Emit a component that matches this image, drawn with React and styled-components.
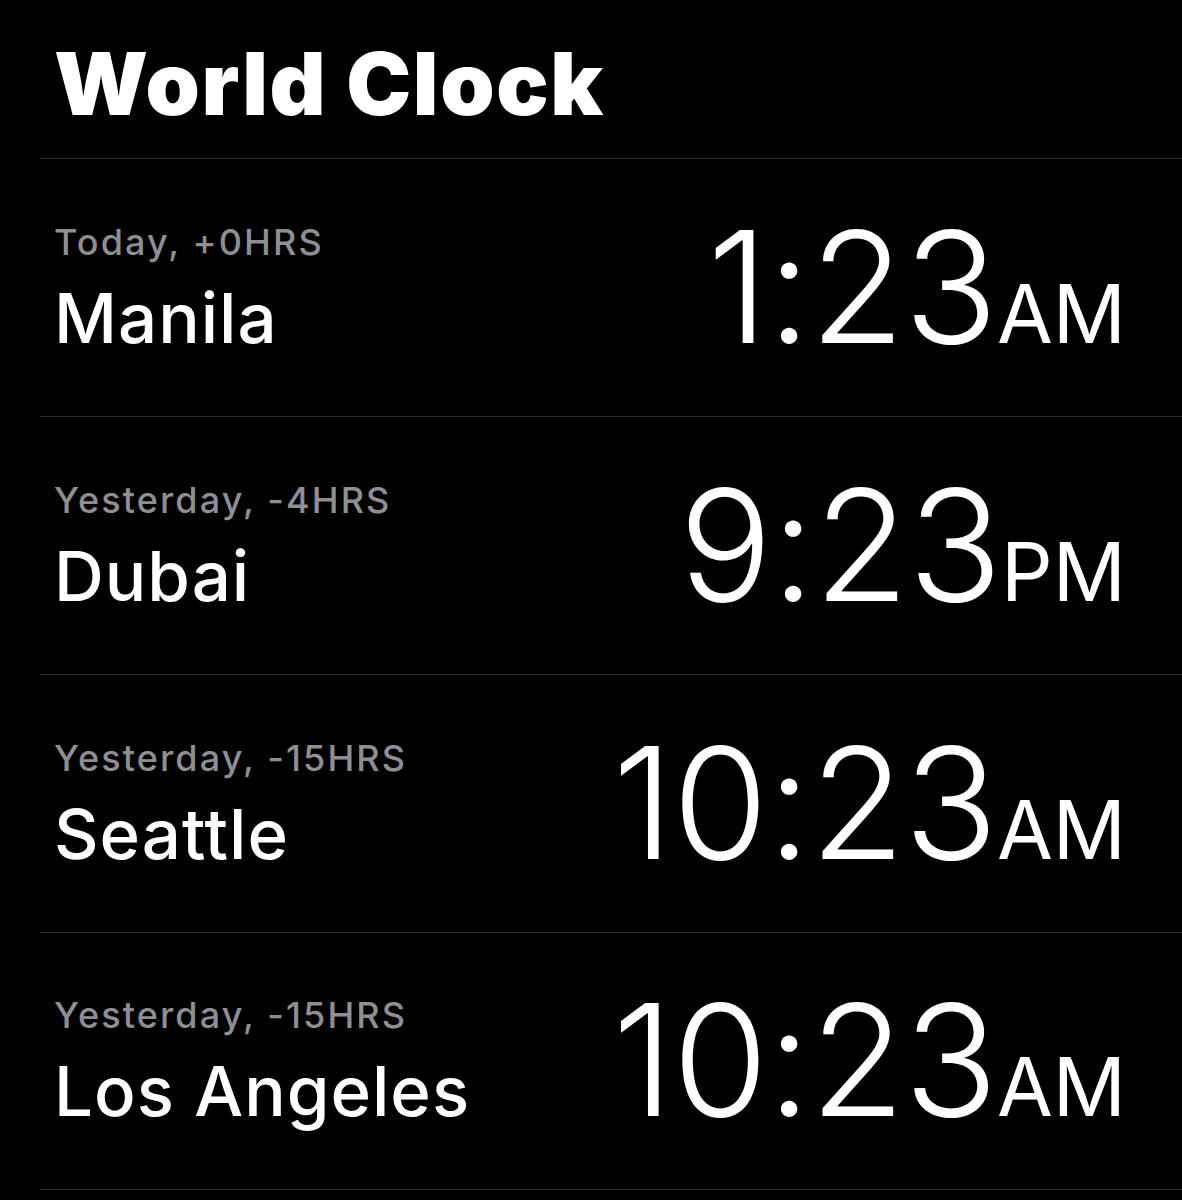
import styled, { createGlobalStyle } from "styled-components";

const cities = [
  { day: "Today, +0HRS", name: "Manila", time: "1:23", meridiem: "AM" },
  { day: "Yesterday, -4HRS", name: "Dubai", time: "9:23", meridiem: "PM" },
  { day: "Yesterday, -15HRS", name: "Seattle", time: "10:23", meridiem: "AM" },
  { day: "Yesterday, -15HRS", name: "Los Angeles", time: "10:23", meridiem: "AM" },
];

const GlobalStyle = createGlobalStyle`
  html, body {
    margin: 0;
    background: #000;
  }

  body {
    font-family: Inter, "Noto Sans", sans-serif;
    -webkit-font-smoothing: antialiased;
  }
`;

const Screen = styled.main`
  min-height: 1200px;
  background: #000;
  color: #fff;
`;

const Header = styled.header`
  height: 158px;
  box-sizing: border-box;
  padding: 40px 0 0 54px;
`;

const Title = styled.h1`
  margin: 0;
  font-size: 87px;
  line-height: 1;
  font-weight: 900;
  letter-spacing: 1.6px;
`;

const List = styled.ul`
  list-style: none;
  margin: 0 0 0 40px;
  padding: 0;
`;

// city on the left, big clock face on the right, both sitting on the same baseline
const Row = styled.li`
  height: 258px;
  box-sizing: border-box;
  border-top: 1px solid #2e2e30;
  padding: 0 56px 60px 14px;
  display: flex;
  justify-content: space-between;
  align-items: flex-end;

  &:last-child {
    border-bottom: 1px solid #2e2e30;
  }
`;

const Place = styled.div`
  display: flex;
  flex-direction: column;
`;

const Offset = styled.span`
  font-size: 36px;
  line-height: 42px;
  font-weight: 500;
  letter-spacing: 2.1px;
  color: #8e8e93;
`;

const City = styled.span`
  margin-top: 17px;
  font-size: 69px;
  line-height: 76px;
  font-weight: 500;
  letter-spacing: 1px;
`;

const Time = styled.span`
  font-size: 155px;
  line-height: 139px;
  font-weight: 300;
  letter-spacing: -1px;
`;

const Meridiem = styled.span`
  font-size: 81px;
  line-height: 1;
  font-weight: 400;
  letter-spacing: 0;
`;

const App = () => {
  return (
    <Screen>
      <GlobalStyle />
      <Header>
        <Title>World Clock</Title>
      </Header>
      <List>
        {cities.map((c) => (
          <Row key={c.name}>
            <Place>
              <Offset>{c.day}</Offset>
              <City>{c.name}</City>
            </Place>
            <Time>
              {c.time}
              <Meridiem>{c.meridiem}</Meridiem>
            </Time>
          </Row>
        ))}
      </List>
    </Screen>
  );
};

export default App;
